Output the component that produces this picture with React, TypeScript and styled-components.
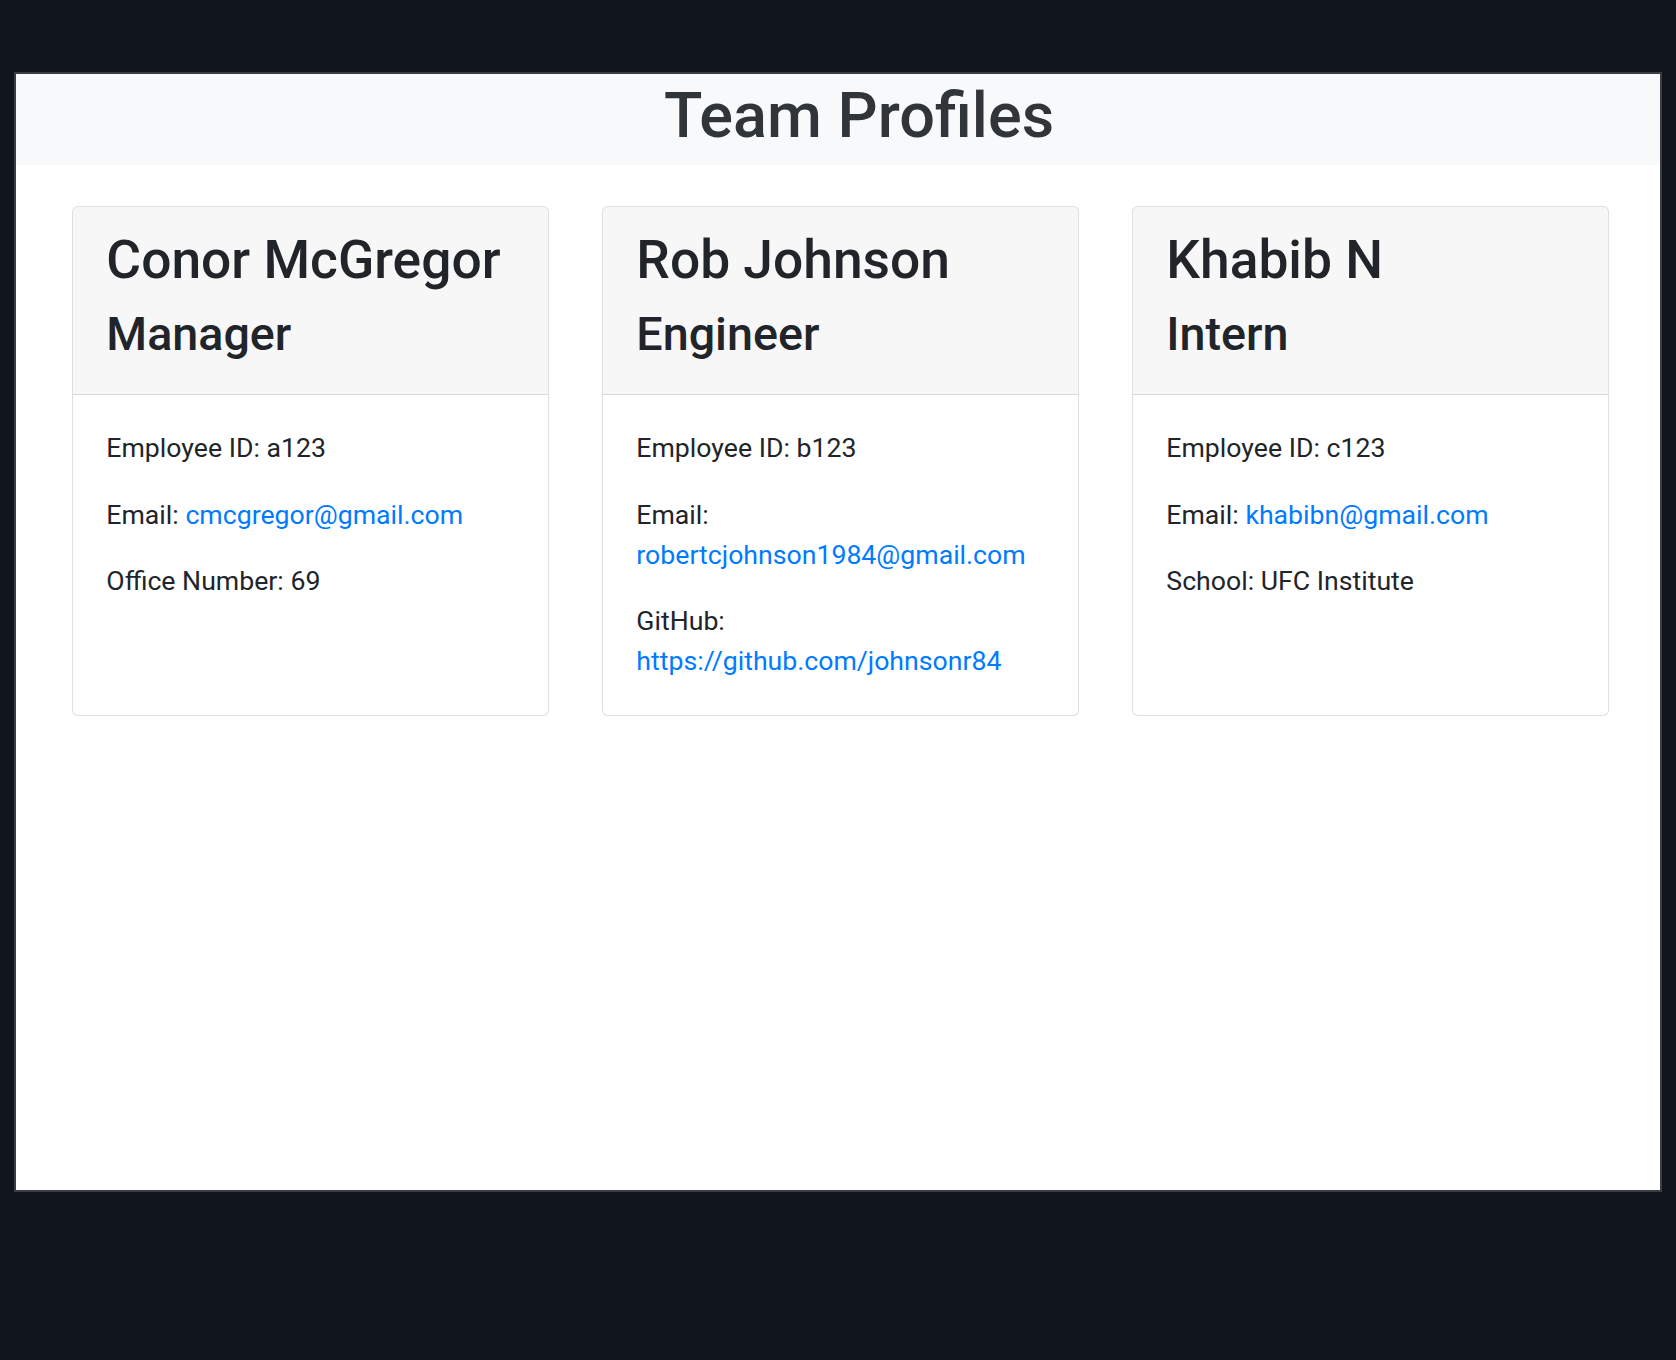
import React from "react";
import styled, { createGlobalStyle } from "styled-components";

const GlobalStyle = createGlobalStyle`
  html, body {
    margin: 0;
    padding: 0;
    background: #10141b;
  }
  body {
    font-family: Roboto, "Liberation Sans", Arial, sans-serif;
    color: #212529;
  }
  * { box-sizing: border-box; }
`;

const Page = styled.div`
  width: 1676px;
  height: 1360px;
  padding: 72px 0 0 14px;
`;

const Frame = styled.div`
  width: 1648px;
  height: 1120px;
  border: 2px solid #3a3d42;
  background: #ffffff;
  display: flex;
  flex-direction: column;
`;

const Banner = styled.header`
  height: 91px;
  background: #f8f9fa;
  display: flex;
  justify-content: center;
  padding-left: 42px;
`;

const Title = styled.h1`
  margin: 0;
  padding-top: 2px;
  font-size: 63px;
  line-height: 80px;
  font-weight: 500;
  color: #30353a;
`;

const Grid = styled.main`
  display: grid;
  grid-template-columns: repeat(3, 1fr);
  column-gap: 53px;
  padding: 41px 51px 0 56px;
  align-items: stretch;
`;

const Card = styled.section`
  display: flex;
  flex-direction: column;
  border: 1px solid rgba(0, 0, 0, 0.125);
  border-radius: 6px;
  background: #fff;
  overflow: hidden;
`;

const CardHeader = styled.div`
  background: rgba(0, 0, 0, 0.03);
  border-bottom: 1px solid rgba(0, 0, 0, 0.125);
  padding: 22px 33.33px 19px;
`;

const Name = styled.h2`
  margin: 0 0 13.33px;
  font-size: 53.33px;
  line-height: 1.2;
  font-weight: 500;
  color: #212529;
`;

const Role = styled.h3`
  margin: 0 0 12.33px;
  font-size: 46.67px;
  line-height: 1.2;
  font-weight: 500;
  color: #212529;
`;

const CardBody = styled.div`
  flex: 1;
  padding: 33.33px;
`;

const Line = styled.p`
  margin: 0 0 26.67px;
  font-size: 26.67px;
  line-height: 40px;
  color: #212529;
  &:last-child {
    margin-bottom: 0;
  }
`;

const Link = styled.a`
  color: #007bff;
  text-decoration: none;
`;

type Field = { label: string; value: string; href?: string };
type Member = { name: string; role: string; fields: Field[] };

const team: Member[] = [
  {
    name: "Conor McGregor",
    role: "Manager",
    fields: [
      { label: "Employee ID:", value: "a123" },
      { label: "Email:", value: "cmcgregor@gmail.com", href: "mailto:cmcgregor@gmail.com" },
      { label: "Office Number:", value: "69" },
    ],
  },
  {
    name: "Rob Johnson",
    role: "Engineer",
    fields: [
      { label: "Employee ID:", value: "b123" },
      { label: "Email:", value: "robertcjohnson1984@gmail.com", href: "mailto:robertcjohnson1984@gmail.com" },
      { label: "GitHub:", value: "https://github.com/johnsonr84", href: "https://github.com/johnsonr84" },
    ],
  },
  {
    name: "Khabib N",
    role: "Intern",
    fields: [
      { label: "Employee ID:", value: "c123" },
      { label: "Email:", value: "khabibn@gmail.com", href: "mailto:khabibn@gmail.com" },
      { label: "School:", value: "UFC Institute" },
    ],
  },
];

export default function App() {
  return (
    <>
      <GlobalStyle />
      <Page>
        <Frame>
          <Banner>
            <Title>Team Profiles</Title>
          </Banner>
          <Grid>
            {team.map((m) => (
              <Card key={m.name}>
                <CardHeader>
                  <Name>{m.name}</Name>
                  <Role>{m.role}</Role>
                </CardHeader>
                <CardBody>
                  {m.fields.map((f) => (
                    <Line key={f.label}>
                      {f.label}{" "}
                      {f.href ? <Link href={f.href}>{f.value}</Link> : f.value}
                    </Line>
                  ))}
                </CardBody>
              </Card>
            ))}
          </Grid>
        </Frame>
      </Page>
    </>
  );
}
